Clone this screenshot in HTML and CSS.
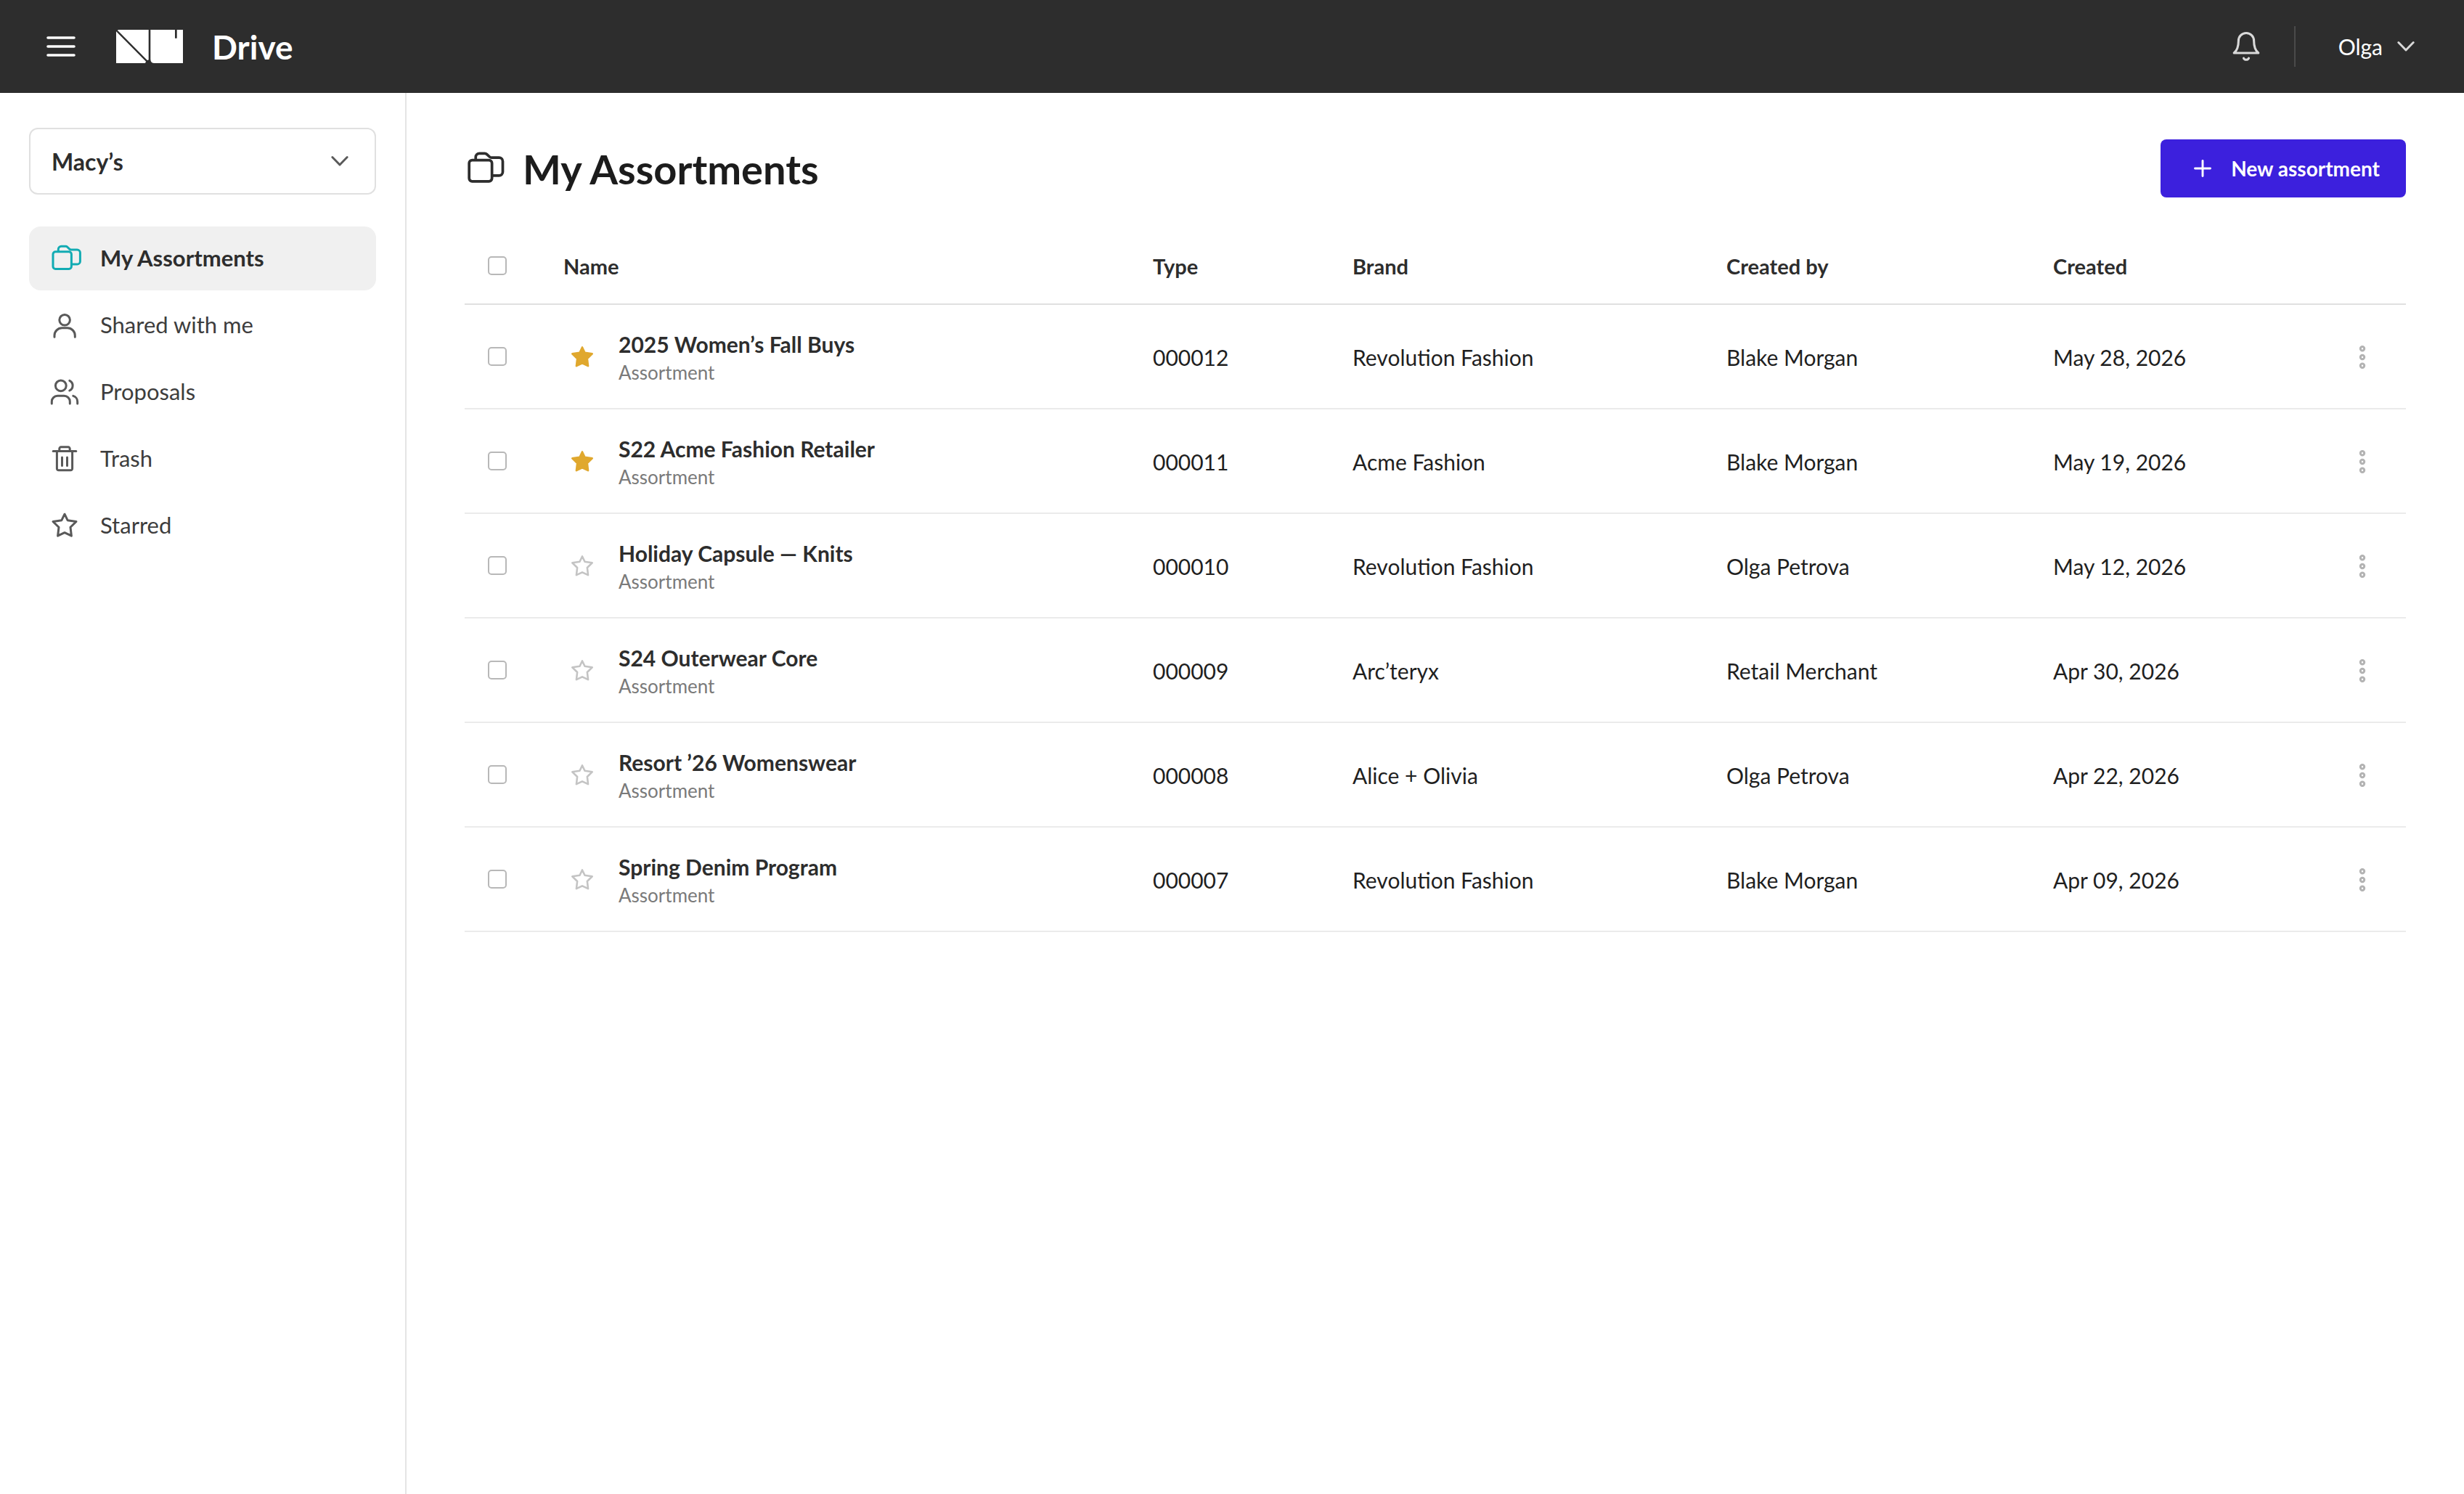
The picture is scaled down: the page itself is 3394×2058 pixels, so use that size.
FILE: index.html
```html
<!DOCTYPE html>
<html lang="en">
<head>
  <meta charset="UTF-8">
  <meta name="viewport" content="width=device-width, initial-scale=1.0">
  <title>Drive - My Assortments</title>
  <link rel="stylesheet" href="styles.css">
</head>
<body>
  <!-- Shared icons -->
  <svg class="sprite" aria-hidden="true">
    <symbol id="icon-folders" viewBox="0 0 42 42" overflow="visible">
      <rect x="5" y="11.8" width="25.4" height="23.6" rx="3.4"/>
      <path d="M12.3 11V8.4a4.1 4.1 0 0 1 4.1-4.1h6c1 0 1.7.3 2.4 1l2.7 2.6c.8.8 1.3 1.1 2.4 1.1h8.4a4.1 4.1 0 0 1 4.1 4.1v11.8a4.1 4.1 0 0 1-4.1 4.1H31"/>
    </symbol>
    <symbol id="icon-star" viewBox="0 0 42 42">
      <path d="M21 5.2L25.1 13.7L37 15.5L29 23.3L30.4 35.2L21 30.7L11.6 35.2L13 23.3L5 15.5L16.9 13.7Z"/>
    </symbol>
    <symbol id="icon-chevron" viewBox="0 0 32 32">
      <path d="M5.8 10.6L16 21L26.2 10.6"/>
    </symbol>
    <symbol id="icon-dots" viewBox="0 0 36 36">
      <circle cx="18" cy="6.3" r="2.7"/>
      <circle cx="18" cy="18" r="2.7"/>
      <circle cx="18" cy="29.7" r="2.7"/>
    </symbol>
  </svg>

  <header class="topbar">
    <div class="topbar-left">
      <svg class="menu-icon" viewBox="0 0 40 28"><path d="M2 2H38M2 14H38M2 26H38"/></svg>
      <svg class="logo" viewBox="0 0 92 46">
        <path d="M0 2.2L40.6 43.2Q41.2 44.4 40 46H0Z"/>
        <path d="M2.4 0H44.7V41.2Q43.6 42.4 42.3 41.6L2.4 1.2Z"/>
        <path d="M47.3 0H81V11.7H83.7V0H92V46H53Q47.3 46 47.3 40.5Z"/>
      </svg>
      <span class="app-name">Drive</span>
    </div>
    <div class="topbar-right">
      <svg class="bell-icon" viewBox="0 0 44 44">
        <path d="M22 3.5C16 3.5 11.4 8.2 11.4 14C11.4 22 9.8 27.2 5.2 31H38.8C34.2 27.2 32.6 22 32.6 14C32.6 8.2 28 3.5 22 3.5Z"/>
        <path d="M18.5 38.2C19.6 41 24.4 41 25.5 38.2"/>
      </svg>
      <div class="user-menu">
        <span>Olga</span>
        <svg class="user-chevron"><use href="#icon-chevron"/></svg>
      </div>
    </div>
  </header>

  <div class="layout">
    <aside class="sidebar">
      <div class="org-select">
        <span>Macy’s</span>
        <svg class="select-chevron"><use href="#icon-chevron"/></svg>
      </div>
      <nav class="nav">
        <a class="nav-item active"><svg class="nav-icon"><use href="#icon-folders"/></svg>My Assortments</a>
        <a class="nav-item">
          <svg class="nav-icon" viewBox="0 0 42 42">
            <circle cx="21.1" cy="13.8" r="7.3"/>
            <path d="M7 37.2V35.2A10.4 10.4 0 0 1 17.4 24.8H24.9A10.4 10.4 0 0 1 35.3 35.2V37.2"/>
          </svg>Shared with me
        </a>
        <a class="nav-item">
          <svg class="nav-icon" viewBox="0 0 42 42">
            <circle cx="15.8" cy="12.3" r="7.4"/>
            <path d="M3.3 37V34.2A7.9 7.9 0 0 1 11.2 26.3H20.4A7.9 7.9 0 0 1 28.3 34.2V37"/>
            <path d="M27.8 5.3A7.6 7.6 0 0 1 27.8 19"/>
            <path d="M32.8 26.4A8 8 0 0 1 38.7 34.2V37"/>
          </svg>Proposals
        </a>
        <a class="nav-item">
          <svg class="nav-icon" viewBox="0 0 42 42">
            <path d="M5.2 10.4H36.8"/>
            <path d="M13.8 10.4V7A2.2 2.2 0 0 1 16 4.8H26A2.2 2.2 0 0 1 28.2 7V10.4"/>
            <path d="M10.4 10.4V34.4A2.4 2.4 0 0 0 12.8 36.8H29.2A2.4 2.4 0 0 0 31.6 34.4V10.4"/>
            <path d="M17.5 19V30.5M24.5 19V30.5"/>
          </svg>Trash
        </a>
        <a class="nav-item"><svg class="nav-icon"><use href="#icon-star"/></svg>Starred</a>
      </nav>
    </aside>

    <main class="content">
      <div class="page-header">
        <svg class="title-icon"><use href="#icon-folders"/></svg>
        <h1>My Assortments</h1>
        <button class="new-btn">
          <svg class="plus-icon" viewBox="0 0 44 44"><path d="M22 11.5V32.5M11.5 22H32.5"/></svg>
          New assortment
        </button>
      </div>

      <div class="table">
        <div class="row head">
          <div><span class="checkbox"></span></div>
          <div>Name</div>
          <div>Type</div>
          <div>Brand</div>
          <div>Created by</div>
          <div>Created</div>
        </div>

        <div class="row">
          <div><span class="checkbox"></span></div>
          <div class="name-cell">
            <svg class="star filled"><use href="#icon-star"/></svg>
            <div><p class="name">2025 Women’s Fall Buys</p><p class="sub">Assortment</p></div>
          </div>
          <div>000012</div>
          <div>Revolution Fashion</div>
          <div>Blake Morgan</div>
          <div>May 28, 2026</div>
          <svg class="dots"><use href="#icon-dots"/></svg>
        </div>

        <div class="row">
          <div><span class="checkbox"></span></div>
          <div class="name-cell">
            <svg class="star filled"><use href="#icon-star"/></svg>
            <div><p class="name">S22 Acme Fashion Retailer</p><p class="sub">Assortment</p></div>
          </div>
          <div>000011</div>
          <div>Acme Fashion</div>
          <div>Blake Morgan</div>
          <div>May 19, 2026</div>
          <svg class="dots"><use href="#icon-dots"/></svg>
        </div>

        <div class="row">
          <div><span class="checkbox"></span></div>
          <div class="name-cell">
            <svg class="star"><use href="#icon-star"/></svg>
            <div><p class="name">Holiday Capsule — Knits</p><p class="sub">Assortment</p></div>
          </div>
          <div>000010</div>
          <div>Revolution Fashion</div>
          <div>Olga Petrova</div>
          <div>May 12, 2026</div>
          <svg class="dots"><use href="#icon-dots"/></svg>
        </div>

        <div class="row">
          <div><span class="checkbox"></span></div>
          <div class="name-cell">
            <svg class="star"><use href="#icon-star"/></svg>
            <div><p class="name">S24 Outerwear Core</p><p class="sub">Assortment</p></div>
          </div>
          <div>000009</div>
          <div>Arc’teryx</div>
          <div>Retail Merchant</div>
          <div>Apr 30, 2026</div>
          <svg class="dots"><use href="#icon-dots"/></svg>
        </div>

        <div class="row">
          <div><span class="checkbox"></span></div>
          <div class="name-cell">
            <svg class="star"><use href="#icon-star"/></svg>
            <div><p class="name">Resort ’26 Womenswear</p><p class="sub">Assortment</p></div>
          </div>
          <div>000008</div>
          <div>Alice + Olivia</div>
          <div>Olga Petrova</div>
          <div>Apr 22, 2026</div>
          <svg class="dots"><use href="#icon-dots"/></svg>
        </div>

        <div class="row">
          <div><span class="checkbox"></span></div>
          <div class="name-cell">
            <svg class="star"><use href="#icon-star"/></svg>
            <div><p class="name">Spring Denim Program</p><p class="sub">Assortment</p></div>
          </div>
          <div>000007</div>
          <div>Revolution Fashion</div>
          <div>Blake Morgan</div>
          <div>Apr 09, 2026</div>
          <svg class="dots"><use href="#icon-dots"/></svg>
        </div>
      </div>
    </main>
  </div>
</body>
</html>
```
FILE: styles.css
```css
* {
  box-sizing: border-box;
}
body {
  margin: 0;
  height: 100vh;
  display: flex;
  flex-direction: column;
  font-family: Lato, "Liberation Sans", sans-serif;
  font-size: 30px;
  color: #1f1f1f;
  background-color: #fff;
}
h1, p {
  margin: 0;
}
svg {
  display: block;
  flex-shrink: 0;
  overflow: visible;
  fill: none;
  stroke: currentColor;
  stroke-linecap: round;
  stroke-linejoin: round;
}
.sprite {
  display: none;
}

/* Top bar */
.topbar {
  height: 128px;
  flex-shrink: 0;
  padding: 0 64px;
  display: flex;
  align-items: center;
  justify-content: space-between;
  background-color: #2d2d2d;
  color: #fff;
}
.topbar-left,
.topbar-right {
  display: flex;
  align-items: center;
}
.menu-icon {
  width: 40px;
  height: 28px;
  margin-right: 56px;
  stroke-width: 3.6;
}
.logo {
  width: 92px;
  height: 46px;
  margin-right: 40px;
  fill: #fff;
  stroke: none;
}
.app-name {
  font-size: 46px;
  font-weight: 700;
}
.bell-icon {
  width: 44px;
  height: 44px;
  margin-right: 44px;
  color: #d9d9d9;
  stroke-width: 3.1;
}
.user-menu {
  height: 56px;
  padding-left: 59px;
  border-left: 2px solid #4a4a4a;
  display: flex;
  align-items: center;
  gap: 16px;
}
.user-chevron {
  width: 32px;
  height: 32px;
  color: #d9d9d9;
  stroke-width: 2.9;
}

.layout {
  flex: 1;
  display: flex;
}

/* Sidebar */
.sidebar {
  width: 560px;
  padding: 48px 40px;
  border-right: 2px solid #e5e5e5;
}
.org-select {
  height: 92px;
  padding: 0 32px 0 29px;
  border: 2px solid #e0e0e0;
  border-radius: 12px;
  display: flex;
  align-items: center;
  justify-content: space-between;
  font-size: 32px;
  font-weight: 700;
  color: #2d2d2d;
}
.select-chevron {
  width: 32px;
  height: 32px;
  color: #595959;
  stroke-width: 2.9;
}
.nav {
  margin-top: 44px;
  display: flex;
  flex-direction: column;
  gap: 4px;
}
.nav-item {
  height: 88px;
  padding: 0 28px 2px;
  border-radius: 16px;
  display: flex;
  align-items: center;
  gap: 28px;
  font-size: 31px;
  line-height: 36px;
  color: #3d3d3d;
}
.nav-item.active {
  background-color: #f0f0f0;
  font-weight: 700;
  color: #2d2d2d;
}
.nav-icon {
  width: 42px;
  height: 42px;
  margin-top: 2px;
  color: #595959;
  stroke-width: 3;
}
.nav-item.active .nav-icon {
  color: #12abb3;
}

/* Main content */
.content {
  flex: 1;
  padding: 64px 80px;
}
.page-header {
  height: 80px;
  margin-bottom: 44px;
  display: flex;
  align-items: center;
}
.title-icon {
  width: 52px;
  height: 52px;
  margin-right: 28px;
  color: #2d2d2d;
  stroke-width: 3;
}
h1 {
  font-size: 56px;
  font-weight: 700;
  color: #1c1c1c;
}
.new-btn {
  height: 80px;
  margin-left: auto;
  padding: 0 36px;
  border: none;
  border-radius: 8px;
  display: flex;
  align-items: center;
  gap: 17px;
  background-color: #3c20dd;
  color: #fff;
  font-family: inherit;
  font-size: 28px;
  font-weight: 700;
}
.plus-icon {
  width: 44px;
  height: 44px;
  stroke-width: 2.9;
}

/* Table */
.row {
  height: 144px;
  padding-top: 2px;
  border-bottom: 2px solid #ebebeb;
  display: grid;
  grid-template-columns: 136px 812px 275px 515px 450px 1fr 78px;
  align-items: center;
}
.row.head {
  height: 104px;
  padding: 0 0 2px;
  border-bottom-color: #e0e0e0;
  font-size: 29px;
  font-weight: 700;
  color: #2d2d2d;
}
.checkbox {
  display: block;
  width: 26px;
  height: 26px;
  margin: 0 0 2px 32px;
  border: 2px solid #b8b8b8;
  border-radius: 5px;
}
.row.head .checkbox {
  margin-bottom: 0;
}
.name-cell {
  padding-left: 8px;
  display: flex;
  align-items: center;
  gap: 32px;
}
.name {
  font-weight: 700;
  color: #2d2d2d;
}
.sub {
  margin-top: 5px;
  font-size: 26px;
  color: #7a7a7a;
}
.star {
  width: 36px;
  height: 36px;
  color: #c4c4c4;
  stroke-width: 3;
}
.star.filled {
  color: #e0a82e;
  fill: #e0a82e;
}
.dots {
  width: 36px;
  height: 36px;
  color: #b3b3b3;
  stroke-width: 3;
}
```
